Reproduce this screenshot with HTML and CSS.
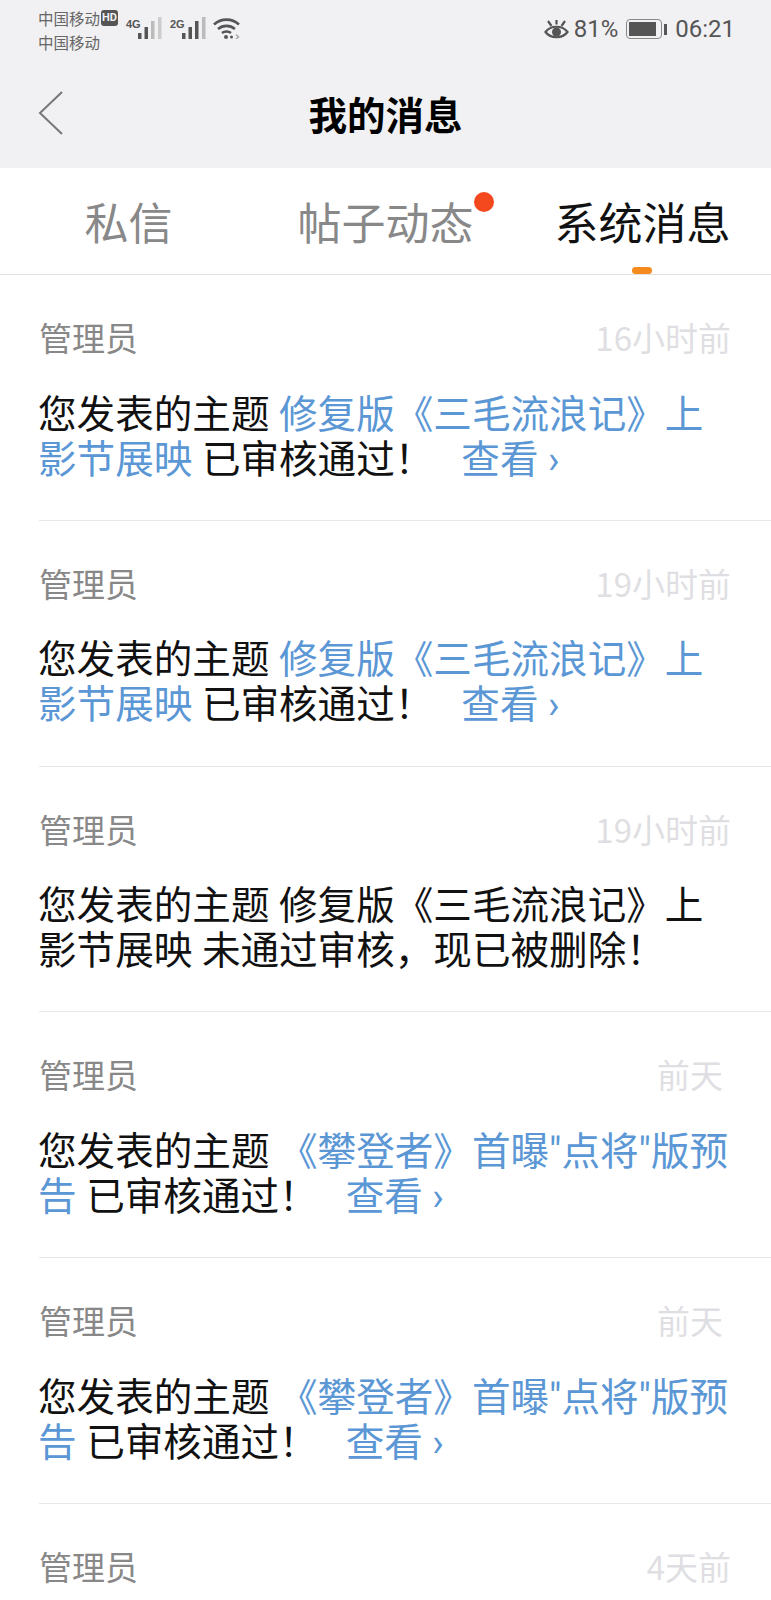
FILE: index.html
```html
<!DOCTYPE html>
<html lang="zh-CN">
<head>
    <meta charset="UTF-8">
    <meta name="viewport" content="width=device-width, initial-scale=1.0">
    <title>我的消息</title>
    <link rel="stylesheet" href="styles.css">
</head>
<body>
    <!-- Status bar + title -->
    <header class="top">
        <div class="status">
            <div class="carriers">
                <div class="carrier">中国移动<span class="hd">HD</span></div>
                <div class="carrier">中国移动</div>
            </div>
            <div class="signal">
                <span class="net">4G</span>
                <svg width="24" height="22" viewBox="0 0 24 22">
                    <rect x="0" y="16" width="3.500" height="6" fill="#555"/>
                    <rect x="6.500" y="10" width="3.500" height="12" fill="#555"/>
                    <rect x="13" y="4" width="3.500" height="18" fill="#bbb"/>
                    <rect x="20" y="0" width="3.500" height="22" fill="#ccc"/>
                </svg>
            </div>
            <div class="signal">
                <span class="net">2G</span>
                <svg width="24" height="22" viewBox="0 0 24 22">
                    <rect x="0" y="16" width="3.500" height="6" fill="#555"/>
                    <rect x="6.500" y="10" width="3.500" height="12" fill="#555"/>
                    <rect x="13" y="4" width="3.500" height="18" fill="#555"/>
                    <rect x="20" y="0" width="3.500" height="22" fill="#bbb"/>
                </svg>
            </div>
            <svg class="wifi" width="27" height="22" viewBox="0 0 27 22" fill="none" stroke="#555" stroke-width="2.600">
                <path d="M1 7.500C8 1 19 1 26 7.500"/>
                <path d="M5 12C10 7.800 17 7.800 22 12"/>
                <path d="M9 16C11.500 14 15.500 14 18 16"/>
                <circle cx="13" cy="20" r="2" fill="#555" stroke="none"/>
                <circle cx="18.500" cy="20" r="1.500" fill="#555" stroke="none"/>
                <path d="M23 17.500l2.500 2.500L23 22" stroke-width="1.500" stroke="#aaa"/>
            </svg>
            <div class="status-right">
                <svg width="25" height="21" viewBox="0 0 25 21" fill="none" stroke="#555" stroke-width="2.200">
                    <path d="M1.500 13C6.500 6 18.500 6 23.500 13C18.500 20 6.500 20 1.500 13Z"/>
                    <circle cx="12.500" cy="13" r="4.500" fill="#555" stroke="none"/>
                    <path d="M4 2l3.500 5M12.500 1v4.500M21 2l-3.500 5"/>
                </svg>
                <span class="pct">81%</span>
                <div class="battery"><div class="battery-fill"></div></div>
                <div class="battery-tip"></div>
                <span class="clock">06:21</span>
            </div>
        </div>
        <div class="titlebar">
            <svg class="back" width="25" height="44" viewBox="0 0 25 44" fill="none" stroke="#777" stroke-width="2">
                <path d="M24 1L2 22L24 43"/>
            </svg>
            <h1>我的消息</h1>
        </div>
    </header>

    <!-- Tabs -->
    <nav class="tabs">
        <div class="tab">私信</div>
        <div class="tab">
            <span class="tab-label">帖子动态<span class="dot"></span></span>
        </div>
        <div class="tab active">系统消息</div>
    </nav>

    <div class="list">
        <div class="item">
            <div class="item-head"><span>管理员</span><span class="time">16小时前</span></div>
            <p class="msg">您发表的主题 <span class="link">修复版《三毛流浪记》上影节展映</span> 已审核通过<span class="punct">！</span><span class="link view">查看 ›</span></p>
        </div>
        <div class="item">
            <div class="item-head"><span>管理员</span><span class="time">19小时前</span></div>
            <p class="msg">您发表的主题 <span class="link">修复版《三毛流浪记》上影节展映</span> 已审核通过<span class="punct">！</span><span class="link view">查看 ›</span></p>
        </div>
        <div class="item">
            <div class="item-head"><span>管理员</span><span class="time">19小时前</span></div>
            <p class="msg">您发表的主题 修复版《三毛流浪记》上影节展映 未通过审核<span class="punct">，</span>现已被删除<span class="punct">！</span></p>
        </div>
        <div class="item">
            <div class="item-head"><span>管理员</span><span class="time short">前天</span></div>
            <p class="msg">您发表的主题 <span class="link">《攀登者》首曝"点将"版预告</span> 已审核通过<span class="punct">！</span><span class="link view">查看 ›</span></p>
        </div>
        <div class="item">
            <div class="item-head"><span>管理员</span><span class="time short">前天</span></div>
            <p class="msg">您发表的主题 <span class="link">《攀登者》首曝"点将"版预告</span> 已审核通过<span class="punct">！</span><span class="link view">查看 ›</span></p>
        </div>
        <div class="item">
            <div class="item-head"><span>管理员</span><span class="time">4天前</span></div>
        </div>
    </div>
</body>
</html>
```

FILE: styles.css
```css
/* General Reset */
html, body {
    height: 1600px;
    overflow: hidden;
}

body {
    margin: 0;
    background: #fff;
    color: #000;
    font-family: "Noto Sans CJK SC", Roboto, sans-serif;
}

/* Status bar and title */
.top {
    height: 168px;
    background: #f1f0f3;
}

.status {
    height: 64px;
    display: flex;
    align-items: flex-start;
    padding: 6px 36px 0 38px;
    color: #555;
    box-sizing: border-box;
}

.carriers {
    width: 88px;
    font-size: 15.500px;
    line-height: 24px;
    color: #666;
}

.carrier {
    display: flex;
    align-items: center;
    white-space: nowrap;
}

.hd {
    margin-left: 1px;
    padding: 0 1px;
    background: #555;
    color: #f1f0f3;
    font-family: Roboto, sans-serif;
    font-size: 11px;
    font-weight: 700;
    line-height: 16px;
    border-radius: 3px;
}

.signal {
    display: flex;
    align-items: flex-start;
    margin: 11px 8px 0 0;
}

.net {
    width: 12px;
    margin-top: 1px;
    font-family: "Liberation Sans", sans-serif;
    font-size: 11px;
    font-weight: 700;
    line-height: 12px;
}

.wifi {
    margin: 11px 0 0 -1px;
}

.status-right {
    margin-left: auto;
    display: flex;
    align-items: center;
    height: 46px;
    font-family: Roboto, sans-serif;
}

.pct {
    margin-left: 5px;
    font-size: 24px;
}

.battery {
    margin-left: 8px;
    width: 36px;
    height: 20px;
    padding: 2px;
    border: 1px solid #888;
    border-radius: 4px;
    box-sizing: border-box;
}

.battery-fill {
    width: 88%;
    height: 100%;
    background: #555;
}

.battery-tip {
    width: 3px;
    height: 11px;
    margin-left: 2px;
    background: #555;
}

.clock {
    margin-left: 8px;
    font-size: 24px;
}

.titlebar {
    position: relative;
    height: 104px;
    display: flex;
    justify-content: center;
    align-items: center;
}

.titlebar h1 {
    margin: 0 0 6px;
    font-size: 38.500px;
    font-weight: 700;
    line-height: 98px;
}

.back {
    position: absolute;
    left: 38px;
    top: 27px;
}

/* Tabs */
.tabs {
    height: 107px;
    display: grid;
    grid-template-columns: repeat(3, 1fr);
    border-bottom: 1px solid #e2e2e4;
    box-sizing: border-box;
}

.tab {
    position: relative;
    text-align: center;
    font-size: 44px;
    line-height: 106px;
    color: #888;
}

.tab-label {
    position: relative;
    display: inline-block;
}

.dot {
    position: absolute;
    top: 24px;
    right: -20px;
    width: 20px;
    height: 20px;
    border-radius: 50%;
    background: #f4481f;
}

.tab.active {
    color: #111;
}

.tab.active::after {
    content: "";
    position: absolute;
    left: 118px;
    bottom: 0;
    width: 20px;
    height: 7px;
    border-radius: 4px;
    background: #f58a1f;
}

/* Message list */
.item {
    height: 245.800px;
    margin-left: 39px;
    box-sizing: border-box;
    padding: 36px 40px 0 0;
    border-bottom: 1px solid #e8e8ea;
}

.item-head {
    display: flex;
    justify-content: space-between;
    font-size: 33px;
    line-height: 52px;
    color: #888;
}

.time {
    color: #dfdfe3;
}

.time.short {
    margin-right: 8px;
}

/* Roboto first keeps the inline boxes shorter than the 45px line */
.msg {
    margin: 28.500px 0 0 -1px;
    font-family: Roboto, "Noto Sans CJK SC", sans-serif;
    font-size: 38.600px;
    line-height: 45px;
    color: #111;
}

.link {
    color: #5b97d5;
}

/* TC glyphs have the centred ！ and ， of the reference */
.punct {
    font-family: Roboto, "Noto Sans CJK TC", sans-serif;
}

.view {
    margin-left: 28px;
}
```
